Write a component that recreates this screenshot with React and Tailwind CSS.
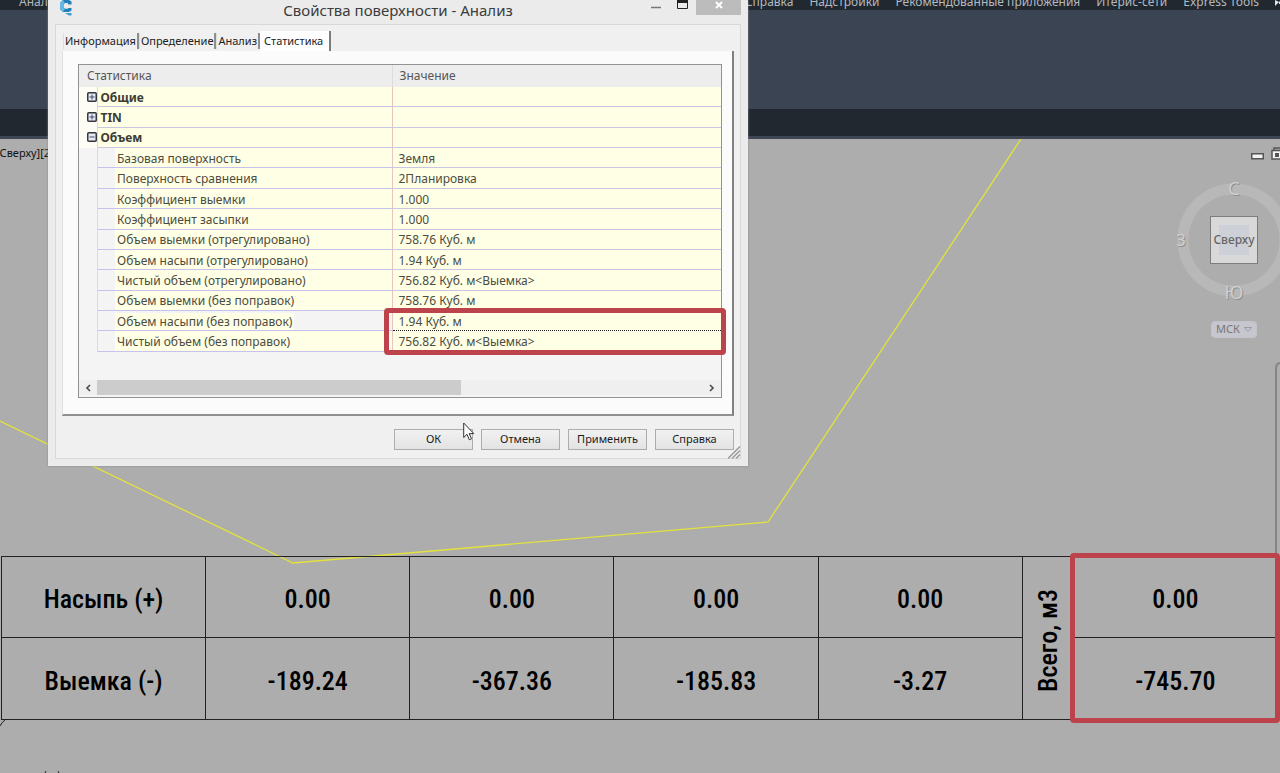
import React from "react";

const ribbonTabs = ["Справка", "Надстройки", "Рекомендованные приложения", "Итерис-сети", "Express Tools"];
const dialogTabs = ["Информация", "Определение", "Анализ"];
const groups = [
  { name: "Общие", open: false, rows: [] },
  { name: "TIN", open: false, rows: [] },
  {
    name: "Объем",
    open: true,
    rows: [
      ["Базовая поверхность", "Земля"],
      ["Поверхность сравнения", "2Планировка"],
      ["Коэффициент выемки", "1.000"],
      ["Коэффициент засыпки", "1.000"],
      ["Объем выемки (отрегулировано)", "758.76 Куб. м"],
      ["Объем насыпи (отрегулировано)", "1.94 Куб. м"],
      ["Чистый объем (отрегулировано)", "756.82 Куб. м<Выемка>"],
      ["Объем выемки (без поправок)", "758.76 Куб. м"],
      ["Объем насыпи (без поправок)", "1.94 Куб. м"],
      ["Чистый объем (без поправок)", "756.82 Куб. м<Выемка>"],
    ],
  },
];
const selectedRow = "Объем насыпи (без поправок)";
const fill = ["0.00", "0.00", "0.00", "0.00"];
const cut = ["-189.24", "-367.36", "-185.83", "-3.27"];

function Expander({ open, name }) {
  return (
    <button type="button" aria-label={name} aria-expanded={open} className="ml-2 block">
      <svg width="10" height="10" viewBox="0 0 10 10" className="block">
        <rect x="0.75" y="0.75" width="8.5" height="8.5" rx="1" fill="#e6e9ef" stroke="#33373d" strokeWidth="1.5" />
        <path d={open ? "M2.5 5h5" : "M2.5 5h5M5 2.5v5"} stroke="#3c4a78" strokeWidth="1" />
      </svg>
    </button>
  );
}

function Ribbon() {
  return (
    <header>
      <nav className="flex h-[10px] items-end justify-between overflow-hidden bg-[#212830] text-[12px] leading-4 text-[#b4b9be]">
        <a href="#analysis" className="ml-[19px]">Анализ</a>
        <div className="flex items-end gap-4">
          {ribbonTabs.map((t) => (
            <a key={t} href="#tab" className="whitespace-nowrap">{t}</a>
          ))}
          <svg width="5" height="10" viewBox="0 0 5 10">
            <path d="M0 0l4 2-4 4zM4 1l1 1v2H4z" fill="#e4e6e8" />
          </svg>
        </div>
      </nav>
      <div className="h-[99px] bg-[#3b4453]" />
      <div className="h-[27px] bg-[#212830]" />
      <div className="h-[3px] bg-[#3f4756]" />
    </header>
  );
}

function StatisticsTable() {
  return (
    <table className="h-[287px] w-full table-fixed border-collapse text-left text-[12px] leading-4 text-[#4c4c40]">
      <colgroup>
        <col className="w-[18px]" />
        <col className="w-[18px]" />
        <col />
        <col className="w-[329px]" />
      </colgroup>
      <thead>
        <tr className="h-[22px] bg-[#ededed] text-[#565656]">
          <th colSpan={3} className="border-r border-[#dcdcdc] pl-2 font-normal">Статистика</th>
          <th className="pl-[7px] font-normal">Значение</th>
        </tr>
      </thead>
      <tbody>
        {groups.map((g) => (
          <React.Fragment key={g.name}>
            <tr>
              <td className="border-r border-[#f3cfd0] bg-[#fdfdf6]"><Expander open={g.open} name={g.name} /></td>
              <td colSpan={2} className="border-r border-b border-r-[#e9c3bd] border-b-[#c9c6e2] bg-[#ffffe6] pt-0.5 pl-[3px] text-[12px] font-bold text-[#3c3c34]">{g.name}</td>
              <td className="border-b border-[#c9c6e2] bg-[#ffffe6]" />
            </tr>
            {g.rows.map(([name, value]) => {
              const selected = name === selectedRow;
              return (
                <tr key={name}>
                  <td className="border-r border-[#f3cfd0]" />
                  <td className="border-b border-[#c5c3ee]" />
                  <td className={`border-r border-b border-r-[#e9c3bd] border-b-[#c5c3ee] pt-0.5 ${selected ? "" : "bg-[#ffffe6]"}`}>
                    <span className="bg-[#ffffe6] px-0.5">{name}</span>
                  </td>
                  <td className={`bg-[#ffffe6] pt-0.5 pl-[6px] ${selected ? "border-b border-l border-dotted border-[#222222]" : "border-b border-[#c9c6e2]"}`}>{value}</td>
                </tr>
              );
            })}
          </React.Fragment>
        ))}
      </tbody>
    </table>
  );
}

function DialogButton({ children }) {
  return (
    <button type="button" className="h-[21px] w-[79px] border border-[#adadad] bg-linear-to-b from-[#f1f1f1] to-[#e3e3e3] pb-0.5 text-[11px] leading-4 text-[#1c1c1c]">
      {children}
    </button>
  );
}

function PropertiesDialog() {
  return (
    <section role="dialog" aria-label="Свойства поверхности - Анализ" className="absolute top-0 left-12 z-20 w-[700px] bg-[#ebebeb] px-[7px] pb-[7px] shadow-[0_0_2px_#8a8a8a]">
      <div className="grid h-6 grid-cols-[1fr_auto_1fr] items-start">
        <svg width="16" height="16" viewBox="0 0 16 16" className="ml-[3px]">
          <path d="M13.500 4.500V1.500L11 0H5L2 3v6l3 3h6l2.500-1.500V8H10.500l-1 .8H7L5.500 7.500v-3L7 3h2.500l1 1.500z" fill="#2480b8" />
          <path d="M2 3L5 0l1.500 2.500-1 2v3L7 8.800 5 12 2 9z" fill="#63b9e3" />
          <path d="M7 13h6.500v2.500H11z" fill="#3b9fcf" />
        </svg>
        <h1 className="text-[15px] leading-5 text-[#3c3c3c]">Свойства поверхности - Анализ</h1>
        <div className="flex justify-end">
          <button type="button" aria-label="Свернуть" className="mr-4">
            <svg width="10" height="15" className="block"><path d="M0 7.500h10" stroke="#777777" strokeWidth="1.500" /></svg>
          </button>
          <button type="button" aria-label="Развернуть" className="mr-2">
            <svg width="11" height="15" className="block"><path d="M0.500 0v8.500h10V0" fill="none" stroke="#222222" /><path d="M0 1.500h11" stroke="#222222" strokeWidth="3" /></svg>
          </button>
          <button type="button" aria-label="Закрыть" className="flex h-[15px] w-[45px] items-center justify-center bg-[#bcbcbc]">
            <svg width="8" height="15"><path d="M1 2l6 6M7 2L1 8" stroke="#ffffff" strokeWidth="2" /></svg>
          </button>
        </div>
      </div>
      <div className="relative border border-[#d8d8d8] bg-[#f0f0f0] px-1.5 pt-1.5 pb-2">
        <div role="tablist" className="relative flex items-end pl-px text-[11px] leading-4 text-[#222222]">
          {dialogTabs.map((t) => (
            <button key={t} type="button" role="tab" className="mb-0.5 h-4 border-r-2 border-l border-r-[#8e8e8e] border-l-[#dddddd] px-px">
              {t}
            </button>
          ))}
          <button type="button" role="tab" aria-selected="true" className="h-5 border-r-2 border-[#7c7c7c] bg-white pr-1.5 pl-1 text-[#222222]">Статистика</button>
        </div>
        <div role="tabpanel" className="border-r-2 border-b-2 border-l border-r-[#808080] border-b-[#909090] border-l-[#e0e0e0] bg-[#fbfbfb] pt-[13px] pr-[10px] pb-4 pl-[15px]">
          <div className="border border-[#8f9297] bg-[#f4f4f4]">
            <StatisticsTable />
            <div className="mt-7 mb-0.5 flex h-[15px] items-center bg-[#efefef]">
              <button type="button" aria-label="Влево" className="flex w-[18px] justify-center">
                <svg width="6" height="8"><path d="M5 1L2 4l3 3" fill="none" stroke="#505050" strokeWidth="1.700" /></svg>
              </button>
              <div className="h-[15px] flex-1"><div className="h-[15px] w-[60%] bg-[#cccccc]" /></div>
              <button type="button" aria-label="Вправо" className="flex w-[18px] justify-center">
                <svg width="6" height="8"><path d="M1 1l3 3-3 3" fill="none" stroke="#505050" strokeWidth="1.700" /></svg>
              </button>
            </div>
          </div>
        </div>
        <div className="mt-[13px] flex justify-end gap-2">
          <DialogButton>ОК</DialogButton>
          <DialogButton>Отмена</DialogButton>
          <DialogButton>Применить</DialogButton>
          <DialogButton>Справка</DialogButton>
        </div>
        <svg width="13" height="13" className="absolute -right-px -bottom-px">
          <path d="M0 12.500L12 .5M4 12.500l8-8M8 12.500l4-4" stroke="#9a9a9a" strokeWidth="1.500" />
        </svg>
      </div>
      <div className="pointer-events-none absolute top-[308px] right-[22px] h-[47px] w-[342px] rounded-[4px] border-[5px] border-[#bc434b]" />
      <svg width="12" height="19" viewBox="0 0 12 19" className="pointer-events-none absolute top-[422px] left-[415px]">
        <path d="M.7 1v14.500l3.300-3.200 2.300 5.500 2.200-1-2.300-5.200h4.600z" fill="#fbfbfb" stroke="#333333" />
      </svg>
    </section>
  );
}

function ViewCube() {
  return (
    <div className="absolute top-[36px] -right-3 flex w-[116px] flex-col items-center">
      <div className="relative">
        <svg width="116" height="130" viewBox="0 0 116 130" className="block overflow-visible font-['Open_Sans','Noto_Sans',sans-serif]">
          <circle cx="58" cy="65" r="51" fill="none" stroke="#b8b8b8" strokeWidth="11" />
          <g fontSize="18" textAnchor="middle" fill="#8e8e8e">
            <text x="59" y="21">С</text>
            <text x="6" y="72" fontSize="16">З</text>
            <text x="59" y="125">Ю</text>
          </g>
          <g fontSize="18" textAnchor="middle" fill="#d0d0d0">
            <text x="58" y="20">С</text>
            <text x="5" y="71" fontSize="16">З</text>
            <text x="58" y="124">Ю</text>
          </g>
        </svg>
        <button type="button" className="absolute top-[41px] left-[34px] flex h-12 w-12 items-center justify-center border border-[#7c7c7c] bg-[#d8d8d8] text-[12px] font-medium text-[#666666]">
          <span className="flex h-[30px] w-[30px] items-center justify-center bg-[#ced0d8]">Сверху</span>
        </button>
      </div>
      <button type="button" className="mt-4 flex h-[17px] w-[46px] items-center justify-center gap-1 rounded-[4px] border border-[#c3c3cb] bg-[#c6c6ce] text-[11px] text-[#777777]">
        МСК
        <svg width="8" height="5"><path d="M.5.500h7L4 4.500z" fill="none" stroke="#9a9aa2" /></svg>
      </button>
    </div>
  );
}

function VolumesTable() {
  const cell = "border border-[#222222] p-0 pt-1 text-center font-medium";
  return (
    <div className="relative pr-0.5 pl-px">
      <table className="h-[164px] w-full table-fixed border-collapse font-['Roboto_Condensed','DejaVu_Sans_Condensed',sans-serif] text-[26px] leading-8 text-black">
        <colgroup>
          <col /><col /><col /><col /><col />
          <col className="w-[51px]" />
          <col />
        </colgroup>
        <tbody>
          <tr>
            <th scope="row" className={cell}>Насыпь (+)</th>
            {fill.map((v, i) => <td key={i} className={cell}>{v}</td>)}
            <th rowSpan={2} className={cell}>
              <span className="inline-block rotate-180 align-middle whitespace-nowrap [writing-mode:vertical-rl]">Всего, м3</span>
            </th>
            <td className={cell}>0.00</td>
          </tr>
          <tr>
            <th scope="row" className={cell}>Выемка (-)</th>
            {cut.map((v, i) => <td key={i} className={cell}>{v}</td>)}
            <td className={cell}>-745.70</td>
          </tr>
        </tbody>
      </table>
      <div className="pointer-events-none absolute -top-[3px] right-0 -bottom-[3px] w-[210px] rounded-[4px] border-[5px] border-[#bc434b]" />
    </div>
  );
}

export default function App() {
  return (
    <div className="relative flex min-h-screen flex-col overflow-hidden bg-[#adadad] font-['Noto_Sans','Open_Sans',sans-serif]">
      <Ribbon />
      <PropertiesDialog />
      <main className="relative flex flex-1 flex-col overflow-hidden">
        <svg width="1280" height="634" viewBox="0 139 1280 634" className="pointer-events-none absolute top-0 left-0">
          <path d="M0 421L293 563L768 522L1021 139" fill="none" stroke="#e3e33c" strokeWidth="1.300" />
          <path d="M0 726q1-3 6-7M45 773l1-2M59 773l-1-2" fill="none" stroke="#222222" />
          <path d="M1276 556V368q0-4 4-5" fill="none" stroke="#858585" strokeWidth="2" />
        </svg>
        <div className="flex items-start justify-between pt-1.5">
          <button type="button" className="-ml-1 text-[11px] leading-4 whitespace-nowrap text-[#111111]">[Сверху][2D каркас]</button>
          <div className="mt-0.5 -mr-1 flex items-end gap-[7px]">
            <button type="button" aria-label="Свернуть вид">
              <svg width="13" height="7" className="block"><rect x=".75" y=".75" width="11.500" height="5" fill="#f2f2f2" stroke="#555555" strokeWidth="1.500" /></svg>
            </button>
            <button type="button" aria-label="Восстановить вид">
              <svg width="13" height="13" className="block"><path d="M3 3V1h9" fill="none" stroke="#555555" strokeWidth="1.500" /><rect x="1" y="3.500" width="11" height="8.500" fill="#f2f2f2" stroke="#555555" strokeWidth="1.500" /><rect x="4" y="6" width="4" height="4" fill="#555555" /></svg>
            </button>
          </div>
        </div>
        <ViewCube />
        <div className="mt-auto mb-[53px]">
          <VolumesTable />
        </div>
      </main>
    </div>
  );
}
